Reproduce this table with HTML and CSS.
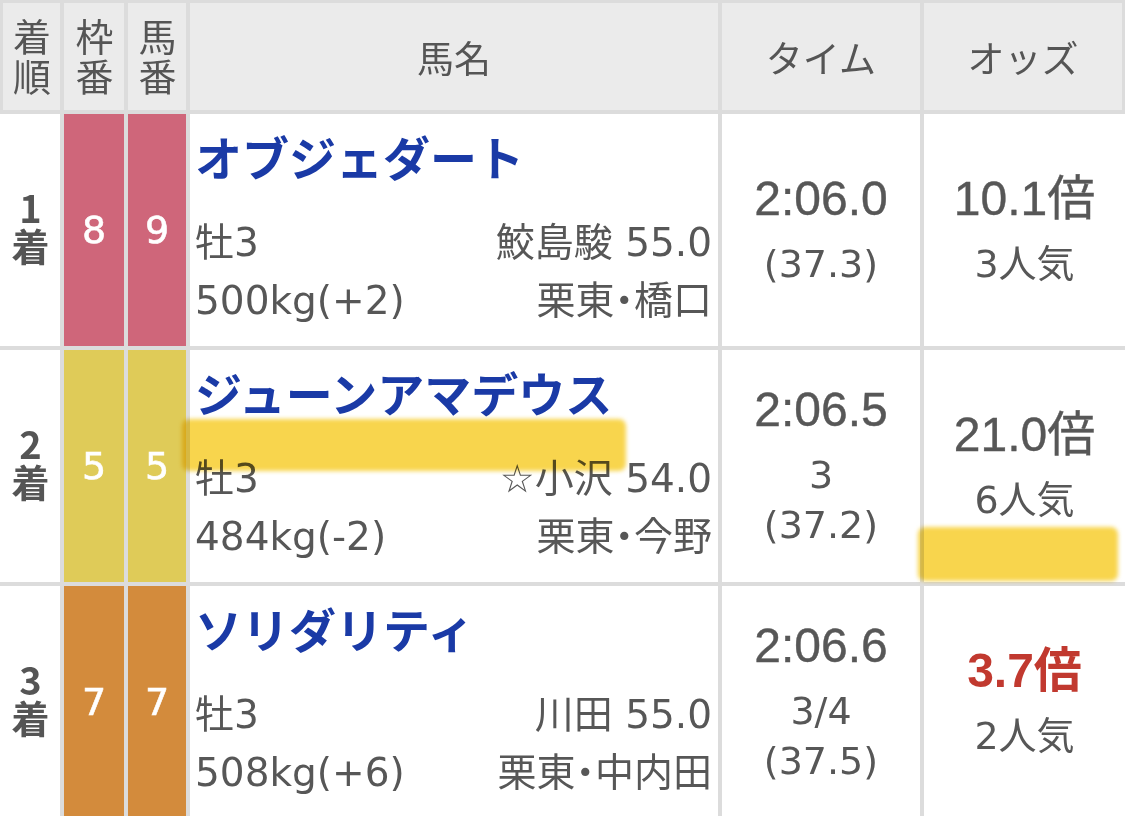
FILE: index.html
```html
<!DOCTYPE html>
<html lang="ja">
<head>
<meta charset="utf-8">
<title>レース結果</title>
<link rel="stylesheet" href="styles.css">
</head>
<body>
<div class="results">
  <div class="hcell h-first"><span class="hv">着順</span></div>
  <div class="hcell"><span class="hv">枠番</span></div>
  <div class="hcell"><span class="hv">馬番</span></div>
  <div class="hcell">馬名</div>
  <div class="hcell">タイム</div>
  <div class="hcell h-last">オッズ</div>

  <div class="rank"><span class="rank-v">1着</span></div>
  <div class="num waku-8">8</div>
  <div class="num waku-8">9</div>
  <div class="horse">
    <div class="horse-name">オブジェダート</div>
    <div class="horse-line"><span>牡3</span><span>鮫島駿 55.0</span></div>
    <div class="horse-line"><span>500kg(+2)</span><span>栗東<span class="dot">・</span>橋口</span></div>
  </div>
  <div class="stack"><div class="main">2:06.0</div><div class="sub">(37.3)</div></div>
  <div class="stack"><div class="main">10.1倍</div><div class="sub">3人気</div></div>

  <div class="rank"><span class="rank-v">2着</span></div>
  <div class="num waku-5">5</div>
  <div class="num waku-5">5</div>
  <div class="horse">
    <div class="horse-name">ジューンアマデウス</div>
    <div class="horse-line"><span>牡3</span><span>☆小沢 54.0</span></div>
    <div class="horse-line"><span>484kg(-2)</span><span>栗東<span class="dot">・</span>今野</span></div>
  </div>
  <div class="stack"><div class="main">2:06.5</div><div class="sub">3</div><div class="sub">(37.2)</div></div>
  <div class="stack"><div class="main">21.0倍</div><div class="sub">6人気</div></div>

  <div class="rank"><span class="rank-v">3着</span></div>
  <div class="num waku-7">7</div>
  <div class="num waku-7">7</div>
  <div class="horse">
    <div class="horse-name">ソリダリティ</div>
    <div class="horse-line"><span>牡3</span><span>川田 55.0</span></div>
    <div class="horse-line"><span>508kg(+6)</span><span>栗東<span class="dot">・</span>中内田</span></div>
  </div>
  <div class="stack"><div class="main">2:06.6</div><div class="sub">3/4</div><div class="sub">(37.5)</div></div>
  <div class="stack"><div class="main hot">3.7倍</div><div class="sub">2人気</div></div>

  <div class="marker marker-name"></div>
  <div class="marker marker-odds"></div>
</div>
</body>
</html>
```

FILE: styles.css
```css
* {
  box-sizing: border-box;
  margin: 0;
  padding: 0;
}

html,
body {
  background: #fff;
}

body {
  width: 1125px;
  height: 816px;
  overflow: hidden;
  font-family: "DejaVu Sans", "Noto Sans CJK JP", sans-serif;
  color: #575757;
}

.results {
  position: relative;
  display: grid;
  grid-template-columns: 60px 60px 58px 528px 198px 1fr;
  grid-template-rows: 107px 232px 232px 232px;
  gap: 4px;
  padding-top: 3px;
  background: #dcdcdc;
}

.hcell {
  background: #ebebeb;
  display: flex;
  align-items: center;
  justify-content: center;
  text-align: center;
  font-family: "Noto Sans CJK JP", sans-serif;
  font-size: 37px;
  line-height: 40px;
  color: #555;
}

.hv {
  writing-mode: vertical-rl;
  font-size: 38px;
  line-height: 1;
  letter-spacing: 2px;
  padding-top: 2px;
}

.h-first {
  border-left: 3px solid #dcdcdc;
}

.h-last {
  border-right: 3px solid #dcdcdc;
}

.rank {
  background: #fff;
  display: flex;
  align-items: center;
  justify-content: center;
  padding-bottom: 4px;
  color: #555;
}

.rank-v {
  writing-mode: vertical-rl;
  text-orientation: upright;
  font-family: "Noto Sans CJK JP", sans-serif;
  font-weight: 700;
  font-size: 38px;
  line-height: 1;
}

.num {
  display: flex;
  align-items: center;
  justify-content: center;
  color: #fff;
  font-size: 38px;
  -webkit-text-stroke: 0.6px #fff;
}

.waku-8 {
  background: #cf667a;
}

.waku-5 {
  background: #dfcb58;
}

.waku-7 {
  background: #d38b3c;
}

.horse {
  background: #fff;
  padding: 12px 6px 0 5px;
  display: flex;
  flex-direction: column;
  white-space: nowrap;
}

.horse-name {
  font-family: "Noto Sans CJK JP", sans-serif;
  font-weight: 700;
  font-size: 47px;
  line-height: 60px;
  height: 60px;
  margin-bottom: 28px;
  color: #1a3aa6;
}

.horse-line {
  display: flex;
  justify-content: space-between;
  align-items: baseline;
  font-size: 39px;
  line-height: 58px;
  height: 58px;
}

.dot {
  font-feature-settings: "palt";
}

.stack {
  background: #fff;
  display: flex;
  flex-direction: column;
  align-items: center;
  justify-content: center;
  white-space: nowrap;
}

.main {
  font-family: "Liberation Sans", "Noto Sans CJK JP", sans-serif;
  font-size: 48px;
  line-height: 56px;
  height: 56px;
  margin-bottom: 12px;
  -webkit-text-stroke: 0.4px currentColor;
}

.sub {
  font-size: 38px;
  line-height: 50px;
  height: 50px;
}

.hot {
  color: #c1392f;
  font-weight: 700;
  -webkit-text-stroke: 0;
}

.marker {
  position: absolute;
  background: #f8d54d;
  mix-blend-mode: multiply;
  filter: blur(2px);
  border-radius: 7px;
}

.marker-name {
  left: 182px;
  top: 419px;
  width: 444px;
  height: 52px;
}

.marker-odds {
  left: 918px;
  top: 527px;
  width: 200px;
  height: 54px;
}
```
